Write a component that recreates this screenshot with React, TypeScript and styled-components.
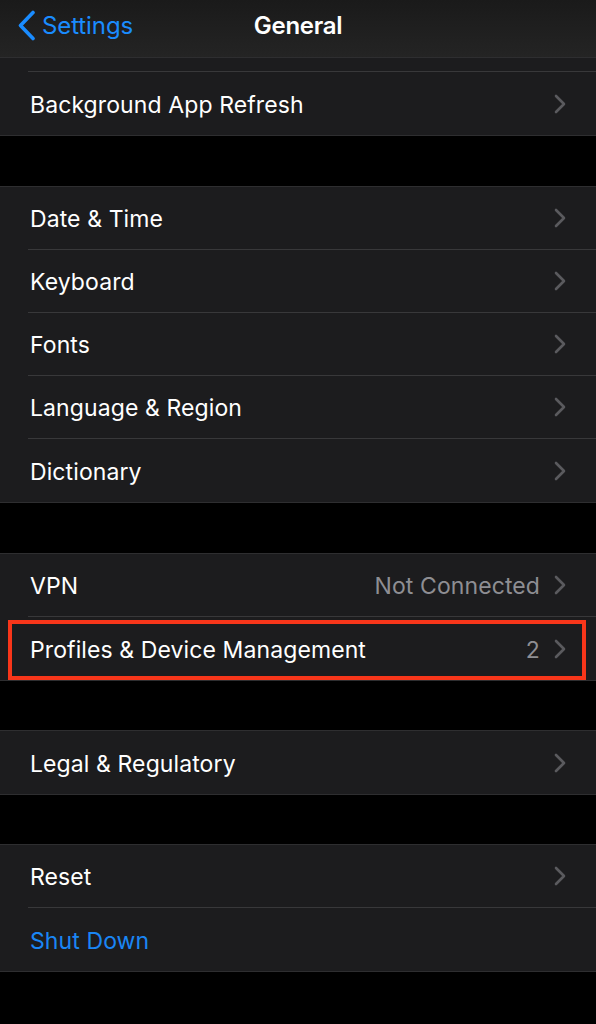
import React from "react";
import styled, { createGlobalStyle } from "styled-components";

const Global = createGlobalStyle`
  html, body { margin: 0; padding: 0; background: #000; }
  body { font-family: Inter, "Noto Sans", "Liberation Sans", sans-serif; -webkit-font-smoothing: antialiased; }
`;

const Page = styled.div`
  width: 596px;
  min-height: 1024px;
  background: #000;
  display: flex;
  flex-direction: column;
`;

const NavBar = styled.header`
  height: 57px;
  box-sizing: border-box;
  padding-bottom: 6px;
  background: linear-gradient(#1a1a1a, #242424);
  display: grid;
  grid-template-columns: 1fr auto 1fr;
  align-items: center;
`;

const BackButton = styled.div`
  display: flex;
  align-items: center;
  gap: 6px;
  padding-left: 17px;
  color: #1a8cff;
  font-size: 24px;
  letter-spacing: -0.1px;
`;

const Title = styled.div`
  color: #fff;
  font-size: 24px;
  font-weight: 600;
  letter-spacing: -0.3px;
`;

const Group = styled.section<{ $gap?: number }>`
  margin-top: ${(p) => p.$gap ?? 0}px;
  background: #1c1c1e;
  border-top: 1px solid #2e2e30;
  border-bottom: 1px solid #2e2e30;
  display: flex;
  flex-direction: column;
`;

const Row = styled.div<{ $height?: number }>`
  position: relative;
  height: ${(p) => p.$height ?? 63}px;
  padding-left: 28px;
  display: flex;
`;

const RowInner = styled.div<{ $sep: boolean }>`
  flex: 1;
  display: flex;
  align-items: center;
  padding-right: 30px;
  border-bottom: ${(p) => (p.$sep ? "1px solid #38383a" : "none")};
`;

const Label = styled.span<{ $blue?: boolean }>`
  flex: 1;
  padding-left: 2px;
  padding-top: 2px;
  color: ${(p) => (p.$blue ? "#1a86f5" : "#fff")};
  font-size: 23px;
  letter-spacing: 0.1px;
`;

const Value = styled.span`
  color: #8e8e93;
  font-size: 23px;
  letter-spacing: 0.1px;
  padding-top: 2px;
  margin-right: 14px;
`;

const Highlight = styled.div`
  position: absolute;
  left: 8px;
  right: 10px;
  top: 3px;
  bottom: 0;
  border: 4px solid #f8361a;
  pointer-events: none;
`;

const Chevron = () => (
  <svg width="12" height="20" viewBox="0 0 12 20" fill="none">
    <path d="M2 2l8 8-8 8" stroke="#5a5a5e" strokeWidth="2.6" strokeLinecap="round" strokeLinejoin="round" />
  </svg>
);

const BackChevron = () => (
  <svg width="19" height="31" viewBox="0 0 19 31" fill="none">
    <path d="M16 2.5L3.5 15.5 16 28.5" stroke="#1a8cff" strokeWidth="3.6" strokeLinecap="round" strokeLinejoin="round" />
  </svg>
);

type Item = { label: string; value?: string; blue?: boolean; noChevron?: boolean; highlight?: boolean };

const SettingsRow = ({ item, last }: { item: Item; last: boolean }) => (
  <Row>
    <RowInner $sep={!last}>
      <Label $blue={item.blue}>{item.label}</Label>
      {item.value && <Value>{item.value}</Value>}
      {!item.noChevron && <Chevron />}
    </RowInner>
    {item.highlight && <Highlight />}
  </Row>
);

const groups: { gap: number; items: Item[] }[] = [
  { gap: 50, items: [{ label: "Date & Time" }, { label: "Keyboard" }, { label: "Fonts" }, { label: "Language & Region" }, { label: "Dictionary" }] },
  { gap: 50, items: [{ label: "VPN", value: "Not Connected" }, { label: "Profiles & Device Management", value: "2", highlight: true }] },
  { gap: 49, items: [{ label: "Legal & Regulatory" }] },
  { gap: 49, items: [{ label: "Reset" }, { label: "Shut Down", blue: true, noChevron: true }] },
];

export default function App() {
  return (
    <Page>
      <Global />
      <NavBar>
        <BackButton>
          <BackChevron />
          <span>Settings</span>
        </BackButton>
        <Title>General</Title>
        <div />
      </NavBar>
      <Group>
        <Row $height={14}>
          <RowInner $sep />
        </Row>
        <SettingsRow item={{ label: "Background App Refresh" }} last />
      </Group>
      {groups.map((g, i) => (
        <Group key={i} $gap={g.gap}>
          {g.items.map((it, j) => (
            <SettingsRow key={it.label} item={it} last={j === g.items.length - 1} />
          ))}
        </Group>
      ))}
    </Page>
  );
}
